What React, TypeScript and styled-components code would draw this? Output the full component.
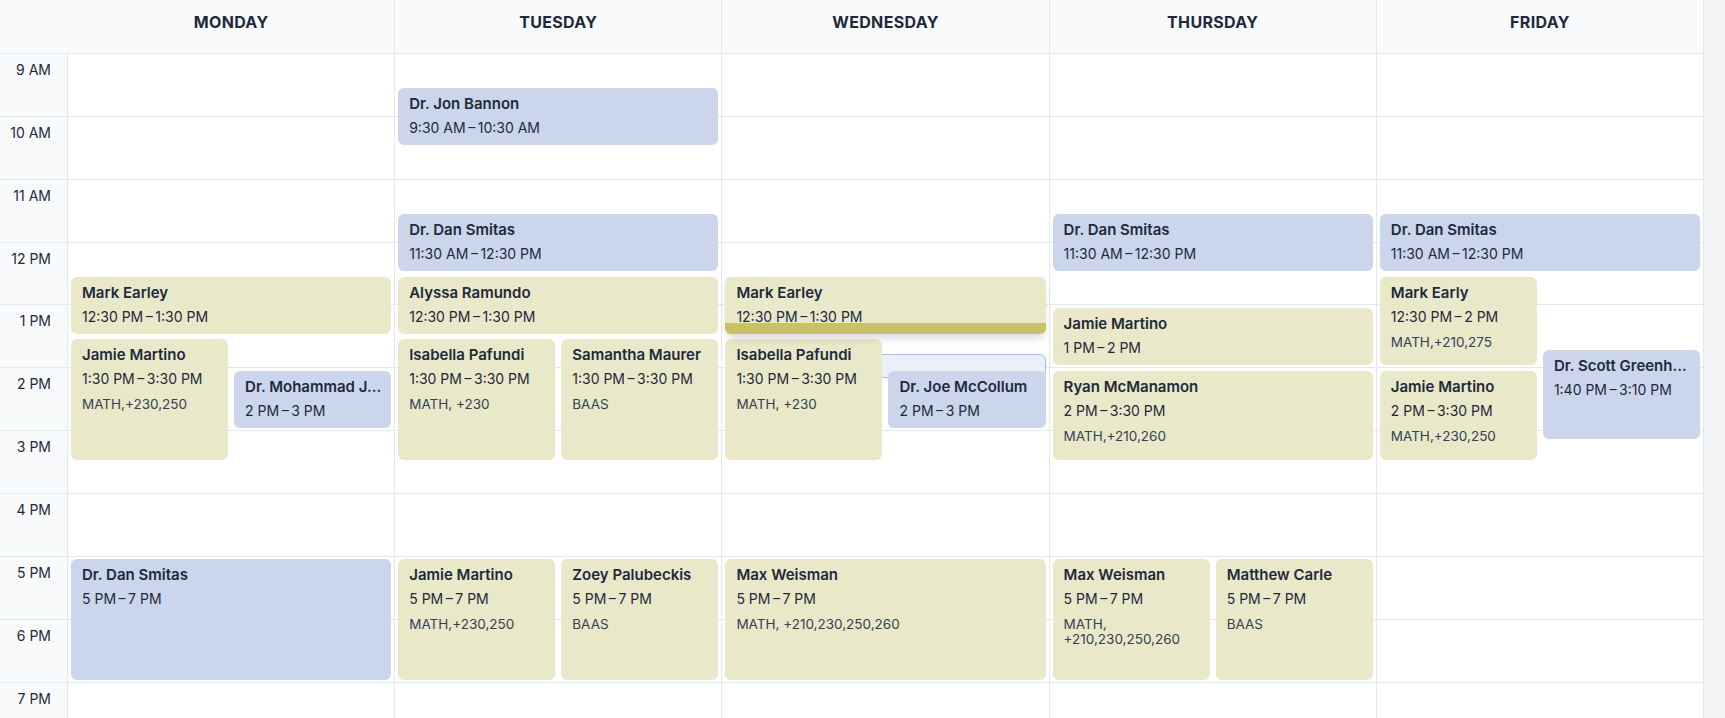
import React from "react";
import styled, { createGlobalStyle, css } from "styled-components";

const HOUR = 62.87;
const START = 9;
const HOURS = 11;
const EDGE = 3;
const GAP = 6;

const GlobalStyle = createGlobalStyle`
  html, body {
    margin: 0;
    padding: 0;
    height: 100%;
    overflow: hidden;
    background: #ffffff;
  }
  body {
    font-family: Inter, "Noto Sans", "Liberation Sans", sans-serif;
    color: #1e293b;
    -webkit-font-smoothing: antialiased;
  }
  *, *::before, *::after { box-sizing: border-box; }
`;

type Tone = "blue" | "yellow";

interface CalEvent {
  name: string;
  time: string;
  extra?: string;
  start: number;
  end: number;
  tone: Tone;
  col?: number;
  cols?: number;
  selected?: boolean;
}

interface Day {
  label: string;
  events: CalEvent[];
  ghost?: { top: number; height: number };
}

const t = (a: string, b: string) => `${a}\u2009\u2013\u2009${b}`;

const days: Day[] = [
  {
    label: "MONDAY",
    events: [
      { name: "Mark Earley", time: t("12:30 PM", "1:30 PM"), start: 12.5, end: 13.5, tone: "yellow" },
      { name: "Jamie Martino", time: t("1:30 PM", "3:30 PM"), extra: "MATH,+230,250", start: 13.5, end: 15.5, tone: "yellow", col: 0, cols: 2 },
      { name: "Dr. Mohammad J...", time: t("2 PM", "3 PM"), start: 14, end: 15, tone: "blue", col: 1, cols: 2 },
      { name: "Dr. Dan Smitas", time: t("5 PM", "7 PM"), start: 17, end: 19, tone: "blue" },
    ],
  },
  {
    label: "TUESDAY",
    events: [
      { name: "Dr. Jon Bannon", time: t("9:30 AM", "10:30 AM"), start: 9.5, end: 10.5, tone: "blue" },
      { name: "Dr. Dan Smitas", time: t("11:30 AM", "12:30 PM"), start: 11.5, end: 12.5, tone: "blue" },
      { name: "Alyssa Ramundo", time: t("12:30 PM", "1:30 PM"), start: 12.5, end: 13.5, tone: "yellow" },
      { name: "Isabella Pafundi", time: t("1:30 PM", "3:30 PM"), extra: "MATH, +230", start: 13.5, end: 15.5, tone: "yellow", col: 0, cols: 2 },
      { name: "Samantha Maurer", time: t("1:30 PM", "3:30 PM"), extra: "BAAS", start: 13.5, end: 15.5, tone: "yellow", col: 1, cols: 2 },
      { name: "Jamie Martino", time: t("5 PM", "7 PM"), extra: "MATH,+230,250", start: 17, end: 19, tone: "yellow", col: 0, cols: 2 },
      { name: "Zoey Palubeckis", time: t("5 PM", "7 PM"), extra: "BAAS", start: 17, end: 19, tone: "yellow", col: 1, cols: 2 },
    ],
  },
  {
    label: "WEDNESDAY",
    ghost: { top: 300, height: 24 },
    events: [
      { name: "Mark Earley", time: t("12:30 PM", "1:30 PM"), start: 12.5, end: 13.5, tone: "yellow", selected: true },
      { name: "Isabella Pafundi", time: t("1:30 PM", "3:30 PM"), extra: "MATH, +230", start: 13.5, end: 15.5, tone: "yellow", col: 0, cols: 2 },
      { name: "Dr. Joe McCollum", time: t("2 PM", "3 PM"), start: 14, end: 15, tone: "blue", col: 1, cols: 2 },
      { name: "Max Weisman", time: t("5 PM", "7 PM"), extra: "MATH, +210,230,250,260", start: 17, end: 19, tone: "yellow" },
    ],
  },
  {
    label: "THURSDAY",
    events: [
      { name: "Dr. Dan Smitas", time: t("11:30 AM", "12:30 PM"), start: 11.5, end: 12.5, tone: "blue" },
      { name: "Jamie Martino", time: t("1 PM", "2 PM"), start: 13, end: 14, tone: "yellow" },
      { name: "Ryan McManamon", time: t("2 PM", "3:30 PM"), extra: "MATH,+210,260", start: 14, end: 15.5, tone: "yellow" },
      { name: "Max Weisman", time: t("5 PM", "7 PM"), extra: "MATH, +210,230,250,260", start: 17, end: 19, tone: "yellow", col: 0, cols: 2 },
      { name: "Matthew Carle", time: t("5 PM", "7 PM"), extra: "BAAS", start: 17, end: 19, tone: "yellow", col: 1, cols: 2 },
    ],
  },
  {
    label: "FRIDAY",
    events: [
      { name: "Dr. Dan Smitas", time: t("11:30 AM", "12:30 PM"), start: 11.5, end: 12.5, tone: "blue" },
      { name: "Mark Early", time: t("12:30 PM", "2 PM"), extra: "MATH,+210,275", start: 12.5, end: 14, tone: "yellow", col: 0, cols: 2 },
      { name: "Jamie Martino", time: t("2 PM", "3:30 PM"), extra: "MATH,+230,250", start: 14, end: 15.5, tone: "yellow", col: 0, cols: 2 },
      { name: "Dr. Scott Greenh...", time: t("1:40 PM", "3:10 PM"), start: 13 + 40 / 60, end: 15 + 10 / 60, tone: "blue", col: 1, cols: 2 },
    ],
  },
];

const hourLabels = ["9 AM", "10 AM", "11 AM", "12 PM", "1 PM", "2 PM", "3 PM", "4 PM", "5 PM", "6 PM", "7 PM"];

const LINE = "#e2e8f0";

const Page = styled.div`
  display: flex;
  width: 1725px;
  height: 718px;
  overflow: hidden;
`;

const Calendar = styled.div`
  flex: 1;
  min-width: 0;
  display: flex;
  flex-direction: column;
`;

const ScrollTrack = styled.div`
  flex: none;
  width: 21px;
  background: #f3f4f6;
`;

const Grid = styled.div`
  display: grid;
  grid-template-columns: 68px repeat(5, minmax(0, 1fr));
`;

const HeaderRow = styled(Grid)`
  flex: none;
  height: 54px;
  background: #f8fafc;
  border-bottom: 1px solid ${LINE};
`;

const CornerCell = styled.div``;

const DayHead = styled.div`
  display: flex;
  align-items: flex-start;
  justify-content: center;
  padding-top: 12px;
  border-right: 1px solid ${LINE};
  font-size: 16px;
  line-height: 20px;
  font-weight: 700;
  letter-spacing: 0.02em;
  color: #1e293b;
`;

const Body = styled(Grid)`
  flex: 1;
  min-height: 0;
  overflow: hidden;
  align-items: start;
`;

const TimeGutter = styled.div`
  display: flex;
  flex-direction: column;
  background: #f8fafc;
  border-right: 1px solid ${LINE};
`;

const TimeLabel = styled.div`
  height: ${HOUR}px;
  flex: none;
  padding: 6px 16px 0 0;
  text-align: right;
  font-size: 14px;
  line-height: 20px;
  color: #1e293b;
  border-bottom: 1px solid ${LINE};
`;

const DayColumn = styled.div`
  position: relative;
  display: flex;
  flex-direction: column;
  border-right: 1px solid ${LINE};
`;

const HourSlot = styled.div`
  height: ${HOUR}px;
  flex: none;
  border-bottom: 1px solid ${LINE};
`;

const tones = {
  blue: "#cbd5eb",
  yellow: "#e9e8c9",
};

const EventCard = styled.div<{ $tone: Tone; $col: number; $cols: number; $selected?: boolean }>`
  position: absolute;
  z-index: 2;
  left: calc(${EDGE}px + ${(p) => p.$col} * ((100% - ${2 * EDGE}px - ${(p) => (p.$cols - 1) * GAP}px) / ${(p) => p.$cols} + ${GAP}px));
  width: calc((100% - ${2 * EDGE}px - ${(p) => (p.$cols - 1) * GAP}px) / ${(p) => p.$cols});
  padding: 6px 6px 6px 11px;
  border-radius: 6px;
  background: ${(p) => tones[p.$tone]};
  overflow: hidden;
  ${(p) =>
    p.$selected &&
    css`
      z-index: 3;
      overflow: visible;
      box-shadow: 0 6px 10px -3px rgba(15, 23, 42, 0.2);
      &::after {
        content: "";
        position: absolute;
        left: 0;
        right: 0;
        bottom: 0;
        height: 11px;
        border-radius: 0 0 6px 6px;
        background: #c9c163;
      }
    `}
`;

const Ghost = styled.div`
  position: absolute;
  z-index: 1;
  left: ${EDGE}px;
  right: ${EDGE}px;
  border-radius: 6px;
  background: #e9effb;
  border: 1px solid #a9b8e0;
`;

const Title = styled.div`
  font-size: 15px;
  font-weight: 600;
  line-height: 20px;
  color: #1e293b;
  white-space: nowrap;
  overflow: hidden;
  text-overflow: ellipsis;
`;

const Time = styled.div`
  margin-top: 4px;
  font-size: 14px;
  line-height: 20px;
  color: #1e293b;
  white-space: nowrap;
`;

const Extra = styled.div`
  margin-top: 8px;
  padding-right: 5px;
  font-size: 13.5px;
  line-height: 15px;
  color: #334155;
`;

const yOf = (h: number) => (h - START) * HOUR;

export default function App() {
  return (
    <>
      <GlobalStyle />
      <Page>
        <Calendar>
          <HeaderRow>
            <CornerCell />
            {days.map((d) => (
              <DayHead key={d.label}>{d.label}</DayHead>
            ))}
          </HeaderRow>
          <Body>
            <TimeGutter>
              {hourLabels.map((l) => (
                <TimeLabel key={l}>{l}</TimeLabel>
              ))}
            </TimeGutter>
            {days.map((d) => (
              <DayColumn key={d.label}>
                {Array.from({ length: HOURS }).map((_, i) => (
                  <HourSlot key={i} />
                ))}
                {d.ghost && <Ghost style={{ top: d.ghost.top, height: d.ghost.height }} />}
                {d.events.map((e, i) => (
                  <EventCard
                    key={i}
                    $tone={e.tone}
                    $col={e.col ?? 0}
                    $cols={e.cols ?? 1}
                    $selected={e.selected}
                    style={{ top: yOf(e.start) + 2.5, height: (e.end - e.start) * HOUR - 5.5 }}
                  >
                    <Title>{e.name}</Title>
                    <Time>{e.time}</Time>
                    {e.extra && <Extra>{e.extra}</Extra>}
                  </EventCard>
                ))}
              </DayColumn>
            ))}
          </Body>
        </Calendar>
        <ScrollTrack />
      </Page>
    </>
  );
}
